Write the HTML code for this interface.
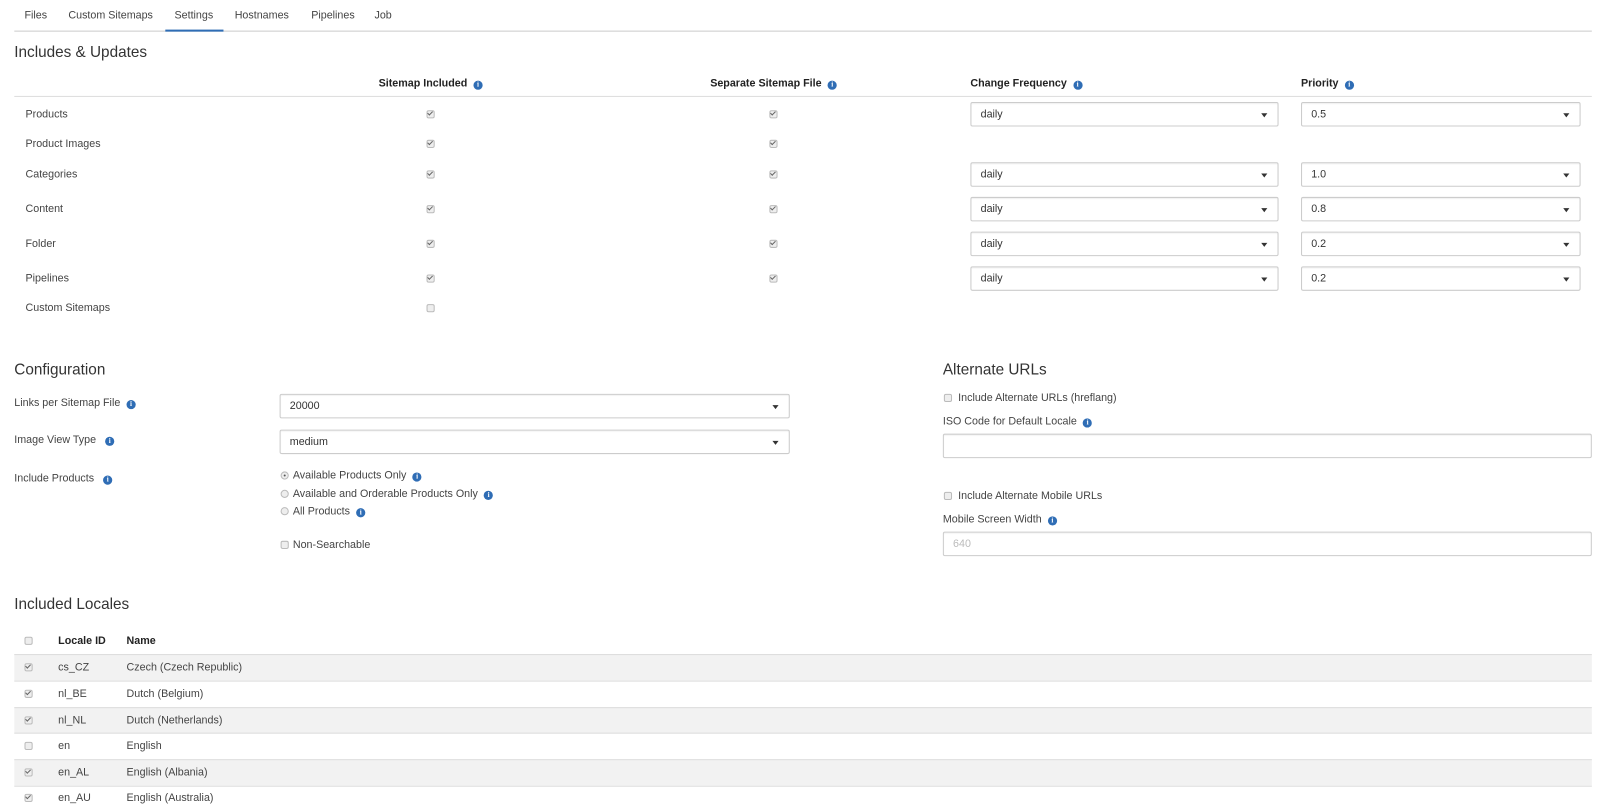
<!DOCTYPE html>
<html><head><meta charset="utf-8"><style>
body{margin:0;width:1600px;height:811px;overflow:hidden;background:#fff;font-family:"Liberation Sans",sans-serif;font-size:10.5px;color:#444;position:relative}
#w{position:absolute;left:0;top:0;width:1568px;height:795px;transform:scale(1.0204);transform-origin:0 0}
.a{position:absolute;white-space:nowrap;line-height:14px}
.h{font-size:15px;line-height:20px;color:#333}
.b{font-weight:bold;color:#222}
.i{display:inline-block;width:9px;height:9px;border-radius:50%;background:#2f6db5;color:#fff;font-size:7px;line-height:9px;text-align:center;font-weight:bold;vertical-align:0px;margin-left:6px;font-family:"Liberation Serif",serif}
.cb{position:absolute;width:6px;height:6px;border:1px solid #bbb;border-radius:2px;background:#eee}
.cb.c::after{content:"";position:absolute;left:1px;top:-1px;width:2px;height:4px;border:solid #666;border-width:0 1px 1px 0;transform:rotate(45deg)}
.rd{position:absolute;width:6px;height:6px;border:1px solid #bbb;border-radius:50%;background:#eee}
.rd.c::after{content:"";position:absolute;left:2px;top:2px;width:2px;height:2px;border-radius:50%;background:#555}
.sel{position:absolute;height:24px;border:1px solid #ccc;border-radius:2px;box-sizing:border-box;padding-left:9px;line-height:22px;font-size:10.5px;color:#333;box-shadow:inset 0 1px 1px rgba(0,0,0,.06)}
.sel.s::after{content:"";position:absolute;right:10px;top:10px;border:3px solid transparent;border-top:4px solid #333;border-bottom:0}
.line{position:absolute;height:1px;background:#ddd}
.row{position:absolute;left:14px;width:1546px;height:25px;border-top:1px solid #ddd}
.g{background:#f2f2f2}
</style></head><body><div id="w">
<div class="a" style="left:24px;top:8px">Files</div>
<div class="a" style="left:67px;top:8px">Custom Sitemaps</div>
<div class="a" style="left:171px;top:8px">Settings</div>
<div class="a" style="left:230px;top:8px">Hostnames</div>
<div class="a" style="left:305px;top:8px">Pipelines</div>
<div class="a" style="left:367px;top:8px">Job</div>
<div class="line" style="left:14px;top:30px;width:1546px;background:#ccc"></div>
<div style="position:absolute;left:162px;top:29px;width:57px;height:2px;background:#2f6db5"></div>

<div class="a h" style="left:14px;top:42px">Includes &amp; Updates</div>
<div class="a b" style="left:371px;top:75px">Sitemap Included<span class="i">i</span></div>
<div class="a b" style="left:696px;top:75px">Separate Sitemap File<span class="i">i</span></div>
<div class="a b" style="left:951px;top:75px">Change Frequency<span class="i">i</span></div>
<div class="a b" style="left:1275px;top:75px">Priority<span class="i">i</span></div>
<div class="line" style="left:14px;top:94px;width:1546px"></div>

<div class="a" style="left:25px;top:105px">Products</div>
<div class="a" style="left:25px;top:134px">Product Images</div>
<div class="a" style="left:25px;top:164px">Categories</div>
<div class="a" style="left:25px;top:198px">Content</div>
<div class="a" style="left:25px;top:232px">Folder</div>
<div class="a" style="left:25px;top:266px">Pipelines</div>
<div class="a" style="left:25px;top:295px">Custom Sitemaps</div>

<div class="cb c" style="left:418px;top:108px"></div><div class="cb c" style="left:754px;top:108px"></div>
<div class="cb c" style="left:418px;top:137px"></div><div class="cb c" style="left:754px;top:137px"></div>
<div class="cb c" style="left:418px;top:167px"></div><div class="cb c" style="left:754px;top:167px"></div>
<div class="cb c" style="left:418px;top:201px"></div><div class="cb c" style="left:754px;top:201px"></div>
<div class="cb c" style="left:418px;top:235px"></div><div class="cb c" style="left:754px;top:235px"></div>
<div class="cb c" style="left:418px;top:269px"></div><div class="cb c" style="left:754px;top:269px"></div>
<div class="cb" style="left:418px;top:298px"></div>

<div class="sel s" style="left:951px;top:100px;width:302px">daily</div><div class="sel s" style="left:1275px;top:100px;width:274px">0.5</div>
<div class="sel s" style="left:951px;top:159px;width:302px">daily</div><div class="sel s" style="left:1275px;top:159px;width:274px">1.0</div>
<div class="sel s" style="left:951px;top:193px;width:302px">daily</div><div class="sel s" style="left:1275px;top:193px;width:274px">0.8</div>
<div class="sel s" style="left:951px;top:227px;width:302px">daily</div><div class="sel s" style="left:1275px;top:227px;width:274px">0.2</div>
<div class="sel s" style="left:951px;top:261px;width:302px">daily</div><div class="sel s" style="left:1275px;top:261px;width:274px">0.2</div>

<div class="a h" style="left:14px;top:353px">Configuration</div>
<div class="a" style="left:14px;top:388px">Links per Sitemap File<span class="i">i</span></div>
<div class="a" style="left:14px;top:424px">Image View Type <span class="i">i</span></div>
<div class="a" style="left:14px;top:462px">Include Products <span class="i">i</span></div>
<div class="sel s" style="left:274px;top:386px;width:500px">20000</div>
<div class="sel s" style="left:274px;top:421px;width:500px">medium</div>
<div class="rd c" style="left:275px;top:462px"></div><div class="a" style="left:287px;top:459px">Available Products Only<span class="i">i</span></div>
<div class="rd" style="left:275px;top:480px"></div><div class="a" style="left:287px;top:477px">Available and Orderable Products Only<span class="i">i</span></div>
<div class="rd" style="left:275px;top:497px"></div><div class="a" style="left:287px;top:494px">All Products<span class="i">i</span></div>
<div class="cb" style="left:275px;top:530px"></div><div class="a" style="left:287px;top:527px">Non-Searchable</div>

<div class="a h" style="left:924px;top:353px">Alternate URLs</div>
<div class="cb" style="left:925px;top:386px"></div><div class="a" style="left:939px;top:383px">Include Alternate URLs (hreflang)</div>
<div class="a" style="left:924px;top:406px">ISO Code for Default Locale<span class="i">i</span></div>
<div class="sel" style="left:924px;top:425px;width:636px"></div>
<div class="cb" style="left:925px;top:482px"></div><div class="a" style="left:939px;top:479px">Include Alternate Mobile URLs</div>
<div class="a" style="left:924px;top:502px">Mobile Screen Width<span class="i">i</span></div>
<div class="sel" style="left:924px;top:521px;width:636px;color:#bbb">640</div>

<div class="a h" style="left:14px;top:583px">Included Locales</div>
<div class="cb" style="left:24px;top:624px"></div>
<div class="a b" style="left:57px;top:621px">Locale ID</div>
<div class="a b" style="left:124px;top:621px">Name</div>
<div class="row g" style="top:641px"></div>
<div class="row" style="top:667px"></div>
<div class="row g" style="top:693px"></div>
<div class="row" style="top:718px"></div>
<div class="row g" style="top:744px"></div>
<div class="row" style="top:770px"></div>
<div class="cb c" style="left:24px;top:650px"></div><div class="a" style="left:57px;top:647px">cs_CZ</div><div class="a" style="left:124px;top:647px">Czech (Czech Republic)</div>
<div class="cb c" style="left:24px;top:676px"></div><div class="a" style="left:57px;top:673px">nl_BE</div><div class="a" style="left:124px;top:673px">Dutch (Belgium)</div>
<div class="cb c" style="left:24px;top:702px"></div><div class="a" style="left:57px;top:699px">nl_NL</div><div class="a" style="left:124px;top:699px">Dutch (Netherlands)</div>
<div class="cb" style="left:24px;top:727px"></div><div class="a" style="left:57px;top:724px">en</div><div class="a" style="left:124px;top:724px">English</div>
<div class="cb c" style="left:24px;top:753px"></div><div class="a" style="left:57px;top:750px">en_AL</div><div class="a" style="left:124px;top:750px">English (Albania)</div>
<div class="cb c" style="left:24px;top:778px"></div><div class="a" style="left:57px;top:775px">en_AU</div><div class="a" style="left:124px;top:775px">English (Australia)</div>
</div></body></html>
